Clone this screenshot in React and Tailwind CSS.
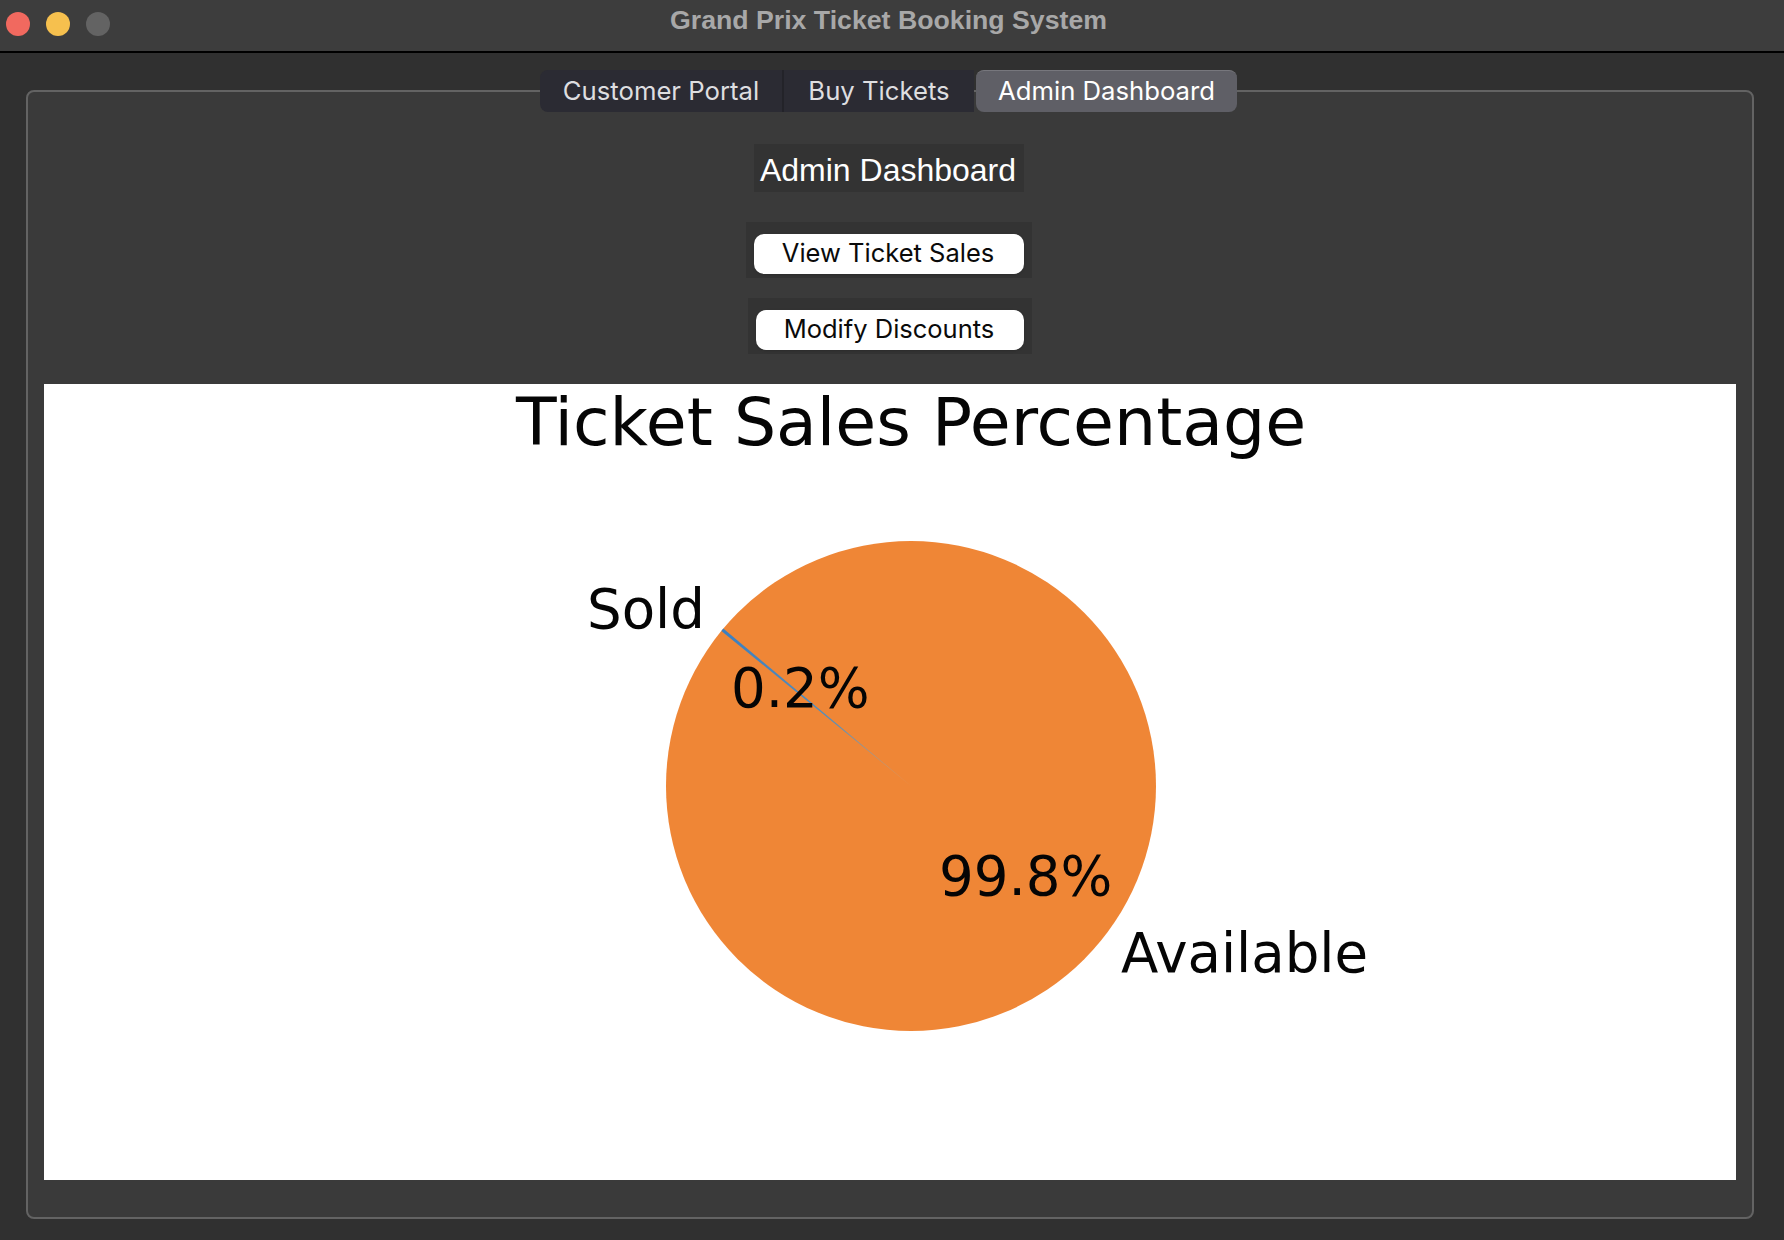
import React from 'react';

const tabs = [
    { label: 'Customer Portal', className: 'w-[244px] rounded-l-lg border-r-2 border-[#232329] bg-[#2b2b33] text-[#dedee0]' },
    { label: 'Buy Tickets', className: 'w-[190px] bg-[#2b2b33] text-[#dedee0]' },
    { label: 'Admin Dashboard', className: 'ml-[2px] w-[261px] rounded-lg border-t border-[#77777d] bg-[#5f5f66] text-white' },
];

const ActionButton = ({ label, className = '' }) => {
    return (
        <div className={`flex h-[56px] items-end justify-center bg-[#333333] px-[8px] pb-[4px] ${className}`}>
            <button className="h-[40px] w-full rounded-[10px] bg-white pb-[2px] pr-[2px] text-[25.5px] text-[#0a0a0a] shadow-sm font-['Inter',sans-serif]">
                {label}
            </button>
        </div>
    );
};

const PieChart = () => {
    return (
        <svg className="block h-[796px] w-[1692px]" viewBox="0 0 1692 796" style={{ fontFamily: '"DejaVu Sans", sans-serif' }}>
            <defs>
                <linearGradient id="soldFade" gradientUnits="userSpaceOnUse" x1="678" y1="246" x2="867" y2="402">
                    <stop offset="0" stopColor="#3b7fc0" />
                    <stop offset="0.6" stopColor="#5a8fb8" />
                    <stop offset="1" stopColor="#d8a070" />
                </linearGradient>
            </defs>
            <text x="472" y="61" fontSize="66.5" fill="#050505">Ticket Sales Percentage</text>
            <circle cx="867" cy="402" r="245" fill="#ef8636" />
            <path d="M867 402 L679.3 244.5 L677.4 246.9 Z" fill="url(#soldFade)" />
            <text x="543" y="244" fontSize="54.6" fill="#050505">Sold</text>
            <text x="687" y="323" fontSize="54.6" fill="#050505">0.2%</text>
            <text x="895" y="511" fontSize="54.6" fill="#050505">99.8%</text>
            <text x="1077" y="588" fontSize="54.6" fill="#050505">Available</text>
        </svg>
    );
};

export default function App() {
    return (
        <div className="flex h-[1240px] w-[1784px] flex-col overflow-hidden bg-[#303030]">
            {/* Title bar */}
            <div className="relative flex h-[53px] shrink-0 items-center border-b-2 border-black bg-[#3d3d3d]">
                <div className="mb-[3px] flex gap-[16px] pl-[6px]">
                    <span className="h-[24px] w-[24px] rounded-full bg-[#f1695f]" />
                    <span className="h-[24px] w-[24px] rounded-full bg-[#f6c04e]" />
                    <span className="h-[24px] w-[24px] rounded-full bg-[#636363]" />
                </div>
                <div className="absolute inset-x-0 top-0 pr-[7px] text-center text-[26.7px] font-bold text-[#a8a8a8] font-['Liberation_Sans',sans-serif]">
                    Grand Prix Ticket Booking System
                </div>
            </div>

            {/* Main panel */}
            <div className="ml-[26px] mr-[30px] mt-[37px] flex h-[1129px] flex-col rounded-lg border-2 border-[#636363] bg-[#3a3a3a] px-[16px]">
                <div className="-mt-[22px] flex justify-center pr-[3px]">
                    {tabs.map((tab) => (
                        <div
                            key={tab.label}
                            className={`flex h-[42px] items-center justify-center text-[25.7px] font-['Inter',sans-serif] ${tab.className}`}
                        >
                            {tab.label}
                        </div>
                    ))}
                </div>

                <div className="mt-[32px] flex flex-col items-center pr-[2px]">
                    <div className="flex h-[48px] w-[270px] items-center justify-center bg-[#333333] pr-[2px] pt-[3px] text-[32px] text-white font-['Liberation_Sans',sans-serif]">
                        Admin Dashboard
                    </div>
                    <ActionButton label="View Ticket Sales" className="mt-[30px] w-[286px]" />
                    <ActionButton label="Modify Discounts" className="ml-[2px] mt-[20px] w-[284px]" />
                </div>

                <div className="mt-[30px] bg-white">
                    <PieChart />
                </div>
            </div>
        </div>
    );
}
